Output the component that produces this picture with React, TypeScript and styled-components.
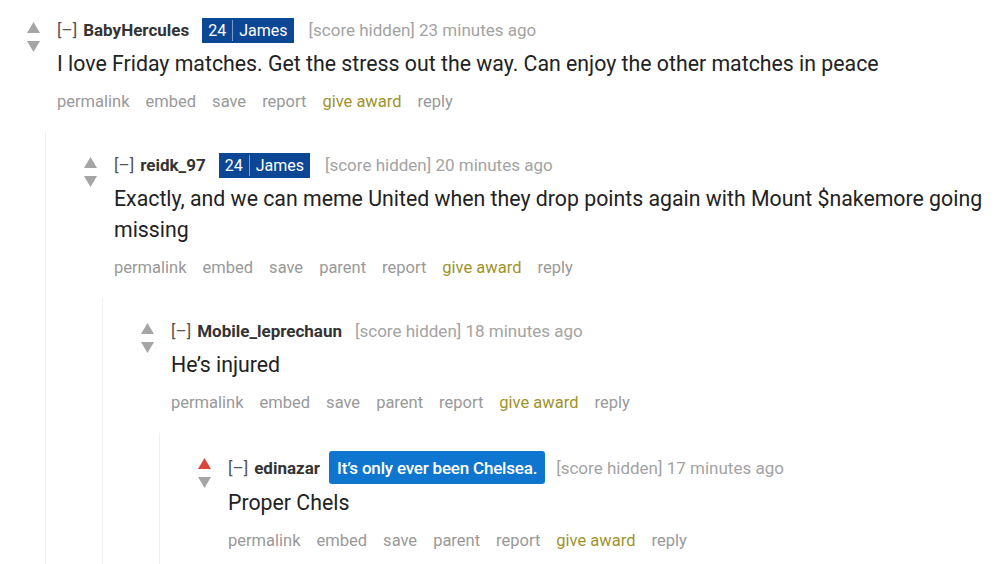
import styled, { createGlobalStyle } from 'styled-components';

type Flair =
  | { kind: 'team'; number: string; name: string }
  | { kind: 'text'; text: string };

interface CommentData {
  author: string;
  flair?: Flair;
  age: string;
  body: string;
  upvoted?: boolean;
  hasParent: boolean;
  children?: CommentData[];
}

const thread: CommentData = {
  author: 'BabyHercules',
  flair: { kind: 'team', number: '24', name: 'James' },
  age: '23 minutes ago',
  body: 'I love Friday matches. Get the stress out the way. Can enjoy the other matches in peace',
  hasParent: false,
  children: [
    {
      author: 'reidk_97',
      flair: { kind: 'team', number: '24', name: 'James' },
      age: '20 minutes ago',
      body: 'Exactly, and we can meme United when they drop points again with Mount $nakemore going missing',
      hasParent: true,
      children: [
        {
          author: 'Mobile_leprechaun',
          age: '18 minutes ago',
          body: 'He\u2019s injured',
          hasParent: true,
          children: [
            {
              author: 'edinazar',
              flair: { kind: 'text', text: 'It\u2019s only ever been Chelsea.' },
              age: '17 minutes ago',
              body: 'Proper Chels',
              upvoted: true,
              hasParent: true,
            },
          ],
        },
      ],
    },
  ],
};

function Arrow({ up, active }: { up?: boolean; active?: boolean }) {
  return (
    <svg width="13" height="11" viewBox="0 0 13 11">
      <path
        d={up ? 'M6.5 0 L13 11 L0 11 Z' : 'M0 0 L13 0 L6.5 11 Z'}
        fill={active ? '#d9473d' : '#a5a5a5'}
      />
    </svg>
  );
}

function FlairTag({ flair }: { flair: Flair }) {
  if (flair.kind === 'team') {
    return (
      <TeamFlair>
        <span>{flair.number}</span>
        <FlairDivider />
        <span>{flair.name}</span>
      </TeamFlair>
    );
  }
  return <TextFlair>{flair.text}</TextFlair>;
}

function Comment({ comment }: { comment: CommentData }) {
  const actions = ['permalink', 'embed', 'save'];
  if (comment.hasParent) actions.push('parent');
  actions.push('report');

  return (
    <Thing>
      <CommentRow>
        <Votes>
          <Arrow up active={comment.upvoted} />
          <Arrow />
        </Votes>
        <Entry>
          <Tagline>
            <Collapse>[–]</Collapse>
            <Author>{comment.author}</Author>
            {comment.flair && <FlairTag flair={comment.flair} />}
            <Score>[score hidden] {comment.age}</Score>
          </Tagline>
          <Body>{comment.body}</Body>
          <Actions>
            {actions.map((a) => (
              <ActionLink key={a}>{a}</ActionLink>
            ))}
            <ActionLink $award>give award</ActionLink>
            <ActionLink>reply</ActionLink>
          </Actions>
        </Entry>
      </CommentRow>
      {comment.children && (
        <Children>
          {comment.children.map((c) => (
            <Comment key={c.author} comment={c} />
          ))}
        </Children>
      )}
    </Thing>
  );
}

function App() {
  return (
    <>
      <GlobalStyle />
      <Page>
        <Comment comment={thread} />
      </Page>
    </>
  );
}

const GlobalStyle = createGlobalStyle`
  html, body {
    margin: 0;
    padding: 0;
    background: #ffffff;
  }
  body {
    font-family: Roboto, "Liberation Sans", sans-serif;
  }
`;

const Page = styled.div`
  width: 1000px;
  height: 564px;
  overflow: hidden;
  padding: 17px 0 0 27px;
  box-sizing: border-box;
  display: flex;
  flex-direction: column;
`;

const Thing = styled.div`
  display: flex;
  flex-direction: column;
  flex: 1;
`;

const CommentRow = styled.div`
  display: flex;
`;

const Votes = styled.div`
  width: 13px;
  display: flex;
  flex-direction: column;
  gap: 8px;
  padding-top: 5px;
  margin-right: 17px;
  flex-shrink: 0;
`;

const Entry = styled.div`
  display: flex;
  flex-direction: column;
  min-width: 0;
`;

const Tagline = styled.div`
  display: flex;
  align-items: center;
  min-height: 26px;
  font-size: 17px;
  white-space: nowrap;
`;

const Collapse = styled.span`
  color: #555555;
  margin-right: 6px;
`;

const Author = styled.span`
  color: #333333;
  font-weight: 700;
  margin-right: 13px;
`;

const TeamFlair = styled.span`
  display: inline-flex;
  align-items: center;
  height: 25px;
  padding: 0 6px;
  gap: 6px;
  background: #0b4794;
  color: #ffffff;
  font-size: 16px;
  margin-right: 15px;
`;

const FlairDivider = styled.span`
  width: 1px;
  height: 21px;
  background: #7f9cc4;
`;

const TextFlair = styled.span`
  display: inline-flex;
  align-items: center;
  height: 33px;
  padding: 0 8px;
  border-radius: 3px;
  background: #0f76cf;
  color: #ffffff;
  font-size: 17px;
  font-weight: 500;
  letter-spacing: -0.2px;
  margin: -2px 11px -2px -4px;
`;

const Score = styled.span`
  color: #a3a3a3;
`;

const Body = styled.div`
  margin-top: 5px;
  font-size: 21.3px;
  line-height: 31px;
  color: #222222;
`;

const Actions = styled.div`
  display: flex;
  gap: 16px;
  margin-top: 13px;
  font-size: 16.5px;
  line-height: 20px;
`;

const ActionLink = styled.span<{ $award?: boolean }>`
  color: ${(p) => (p.$award ? '#a0922b' : '#999999')};
`;

const Children = styled.div`
  display: flex;
  flex-direction: column;
  flex: 1;
  margin: 20px 0 0 18px;
  padding: 20px 0 0 38px;
  border-left: 1px solid #efefef;
`;

export default App;
